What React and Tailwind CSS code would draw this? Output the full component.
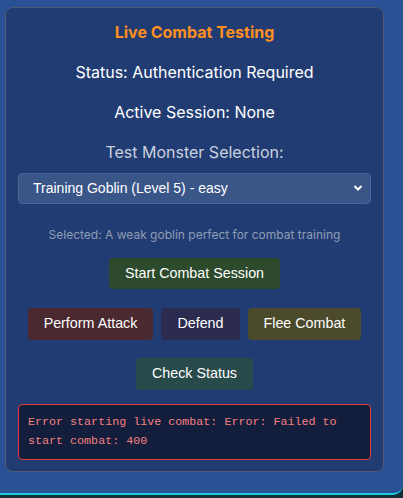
export default function App() {
  return (
    <div className="min-h-[498px] w-[403px] bg-[#11303a]">
      <div className="h-[495px] w-[403px] rounded-br-[10px] border-b-2 border-[#1ec8de] bg-[#2a5196] pt-[7px] pl-[5px]">
        <div className="w-[379px] rounded-[8px] border border-[#4f5b6e] bg-[#213c73] px-3 pt-[12px] pb-[11px] flex flex-col items-center">
          <div className="h-[24px] leading-[24px] text-[16px] font-bold text-[#ff8f1f] font-['Inter',sans-serif]">Live Combat Testing</div>
          <div className="mt-[16px] h-[24px] leading-[24px] text-[16px] text-white font-['Inter',sans-serif]">Status: Authentication Required</div>
          <div className="mt-[16px] h-[24px] leading-[24px] text-[16px] text-white font-['Inter',sans-serif]">Active Session: None</div>
          <div className="mt-[15px] h-[26px] leading-[26px] text-[16px] text-[#c9d1de] font-['Inter',sans-serif]">Test Monster Selection:</div>
          <div className="relative mt-[8px] w-full">
            <select className="appearance-none w-full h-[31px] rounded-[4px] border border-[#4a6493] bg-[#3a5689] pl-[14px] text-[14px] text-white font-['Liberation_Sans',Arial,sans-serif] outline-none">
              <option>Training Goblin (Level 5) - easy</option>
            </select>
            <svg className="pointer-events-none absolute right-[8px] top-[11px]" width="10" height="8" viewBox="0 0 10 8">
              <path d="M1.5 2 L5 5.5 L8.5 2" stroke="white" strokeWidth="2" fill="none" />
            </svg>
          </div>
          <div className="mt-[23px] h-[16px] leading-[16px] text-[12px] text-[#8f9db3] font-['Inter',sans-serif]">Selected: A weak goblin perfect for combat training</div>
          <button className="mt-[15px] h-[31px] px-4 rounded-[4px] bg-[#2d4b2c] text-[14.3px] text-white font-['Liberation_Sans',Arial,sans-serif]">Start Combat Session</button>
          <div className="mt-[19px] flex gap-2">
            <button className="h-[32px] px-4 rounded-[4px] bg-[#4a2930] text-[14.3px] text-white font-['Liberation_Sans',Arial,sans-serif]">Perform Attack</button>
            <button className="h-[32px] px-4 rounded-[4px] bg-[#2c2c50] text-[14.3px] text-white font-['Liberation_Sans',Arial,sans-serif]">Defend</button>
            <button className="h-[32px] px-4 rounded-[4px] bg-[#4b4a2b] text-[14.3px] text-white font-['Liberation_Sans',Arial,sans-serif]">Flee Combat</button>
          </div>
          <button className="mt-[18px] h-[32px] px-4 rounded-[4px] bg-[#294a4a] text-[14.3px] text-white font-['Liberation_Sans',Arial,sans-serif]">Check Status</button>
          <div className="mt-[14px] w-full rounded-[4px] border border-[#e5393c] bg-[#121e3c] px-[9px] py-[8px] text-[11.7px] leading-[19px] text-[#f58080] font-['Liberation_Mono',monospace]">
            Error starting live combat: Error: Failed to start combat: 400
          </div>
        </div>
      </div>
    </div>
  );
}
